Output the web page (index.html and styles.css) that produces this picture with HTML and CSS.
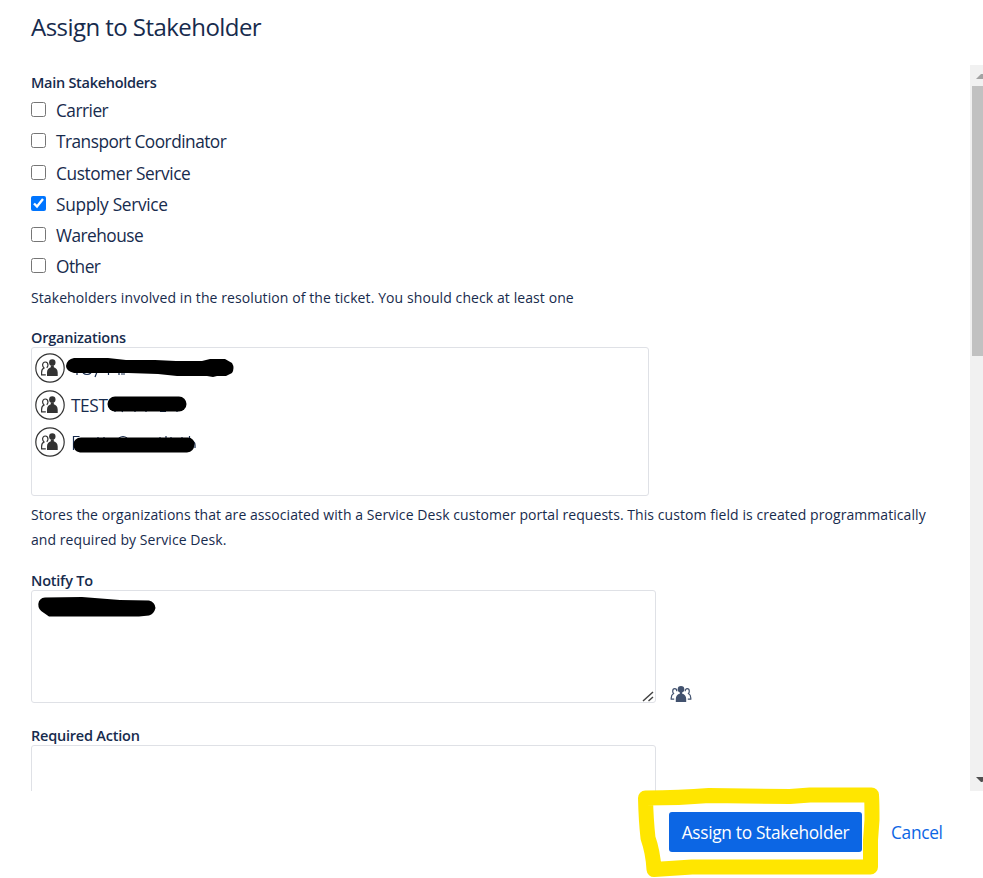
FILE: index.html
```html
<!DOCTYPE html>
<html lang="en">
<head>
<meta charset="utf-8">
<title>Assign to Stakeholder</title>
<link rel="stylesheet" href="styles.css">
</head>
<body>
<svg class="defs" width="0" height="0" aria-hidden="true">
  <symbol id="org" viewBox="0 0 30 30">
    <circle cx="15" cy="15" r="14.2" fill="#fff" stroke="#333" stroke-width="1.2"/>
    <circle cx="17.3" cy="9.4" r="3.2" fill="#333"/>
    <path d="M12 23v-3.500c0-3 1.700-4.500 3.800-5.300v-2h3v2c2.100.8 3.900 2.300 3.900 5.300V23z" fill="#333"/>
    <path d="M13 12.200c0-2-1.100-3.200-2.700-3.200S7.600 10.200 7.600 12c0 1.300.7 2.300 1.400 3-1.600.7-2.400 2.300-2.400 4.500v2.300h4.200M13 12c0 1.300-.6 2-1.200 2.800" fill="none" stroke="#333" stroke-width="1.200"/>
  </symbol>
</svg>
<main class="dialog">
  <header class="head"><h1>Assign to Stakeholder</h1></header>
  <div class="body">
    <form class="content">
      <fieldset class="group">
        <legend class="label">Main Stakeholders</legend>
        <label class="check"><input type="checkbox"><span class="tight">Carrier</span></label>
        <label class="check"><input type="checkbox"><span class="tight">Transport Coordinator</span></label>
        <label class="check nudge"><input type="checkbox"><span>Customer Service</span></label>
        <label class="check"><input type="checkbox" checked><span class="loose">Supply Service</span></label>
        <label class="check"><input type="checkbox"><span class="tight">Warehouse</span></label>
        <label class="check"><input type="checkbox"><span class="tight">Other</span></label>
        <p class="help first">Stakeholders involved in the resolution of the ticket. You should check at least one</p>
      </fieldset>
      <section class="field orgs">
        <div class="label">Organizations</div>
        <div class="orgbox">
          <div class="org"><svg class="avatar"><use href="#org"/></svg></div>
          <div class="org"><svg class="avatar"><use href="#org"/></svg><span>TEST</span></div>
          <div class="org"><svg class="avatar"><use href="#org"/></svg></div>
          <svg class="ink orgink" viewBox="31 347 218 149">
            <g fill="none" stroke="#172b4d" stroke-width="1.200">
              <path d="M77 372v3M83 373q4 3 8 0M97 372l-2 5M108.500 372v3M119 372v3M121 374h4M115 410v2M123 410l-1 2M135 410v2M146 410v2M160 411.500h6M177 410v2"/>
              <path d="M73.500 450v-13.500h6M98 437v3M104 437v3M119 438q4-3 8 0M160 437v3M166 436v4M171 437v3M182 437v3M189.500 436v5M191 441q4 0 4 4v3"/>
            </g>
            <path d="M74 358H108L126 360H155L176 361H202L210 359H225L232 363Q235 368 232 373L226 376H217L213 377L207 376H177L158 374L128 373H74Q66 371 66 366Q67 359 74 358Z"/>
            <rect x="107.500" y="396.500" width="79" height="15" rx="7.500"/>
            <path d="M81 437.500H188Q194 438 194.500 444Q194 452 187 452.500H80Q73 451 73.500 444Q74 438 81 437.500Z"/>
          </svg>
        </div>
        <p class="help">Stores the organizations that are associated with a Service Desk customer portal requests. This custom field is created programmatically<br>and required by Service Desk.</p>
      </section>
      <section class="field notify">
        <div class="label">Notify To</div>
        <div class="notifyrow">
          <div class="area">
            <svg class="ink notifyink" viewBox="31 590 135 30"><path d="M45 597.500L82 597L120 600L149 600.500Q155 602 155.500 608Q154 614 149 615.500L139 616.500H49L44 613Q38 610 38.300 604Q39 598 45 597.500Z"/></svg>
            <svg class="grip" viewBox="0 0 12 12"><path d="M1 11L11 2M6.500 11L11 7" stroke="#444" stroke-width="1.500"/></svg>
          </div>
          <svg class="people" viewBox="0 0 22 18">
            <g fill="#42526e"><circle cx="11" cy="4.300" r="3.300"/><path d="M5.800 17v-3c0-3 1.600-4.800 4-5.300V7h2.400v1.700c2.400.5 4 2.300 4 5.300v3z"/></g>
            <path d="M6.800 6.300C6.800 4.600 6 3.600 4.800 3.600S2.700 4.700 2.700 6.300c0 1 .4 1.700.9 2.300C2 9.500 1.200 11 1.200 13v1.200h3M15.200 6.300c0-1.700.8-2.700 2-2.700s2.100 1.100 2.100 2.700c0 1-.4 1.700-.9 2.300 1.600.9 2.400 2.400 2.400 4.400v1.200h-3" fill="none" stroke="#42526e" stroke-width="1.200"/>
          </svg>
        </div>
      </section>
      <section class="field action">
        <div class="label">Required Action</div>
        <div class="area"></div>
      </section>
    </form>
    <div class="scroll">
      <svg viewBox="0 0 13 21"><path d="M6 14h8V9.500L13 9h-2z" fill="#a3a3a3"/></svg>
      <div class="thumb"></div>
      <svg class="down" viewBox="0 0 13 21"><path d="M6 7h8v4l-2 1h-1z" fill="#505050"/></svg>
    </div>
  </div>
  <footer class="foot">
    <button class="submit"><span>Assign to Stakeholder</span></button>
    <a class="cancel">Cancel</a>
    <svg class="mark" viewBox="630 780 260 98"><path d="M645.500 798Q680 798 709 795.500L790 796.500L810 795H871.500Q872 802 872 820L870.500 840V867L692 867L654 869.500Q653 852 648 838Q646 820 645.500 798Z" fill="none" stroke="#ffe600" stroke-width="15" stroke-linejoin="round"/></svg>
  </footer>
</main>
</body>
</html>
```

FILE: styles.css
```css
* { box-sizing: border-box; }
body { margin: 0; background: #fff; color: #172b4d; font-family: "Open Sans", "Noto Sans", sans-serif; overflow: hidden; }
.defs { display: block; }
.dialog { height: 878px; display: flex; flex-direction: column; }
.head { height: 65px; padding: 10px 31px; flex: none; }
h1 { margin: 0; font-size: 24px; line-height: 34px; font-weight: 400; white-space: nowrap; letter-spacing: -0.55px; }
.body { height: 726px; flex: none; display: flex; overflow: hidden; }
.content { flex: 1; padding: 8px 31px 0; min-width: 0; }
.group { border: 0; padding: 0; margin: 0; }
.label { display: block; height: 20px; padding: 0; font-size: 14.5px; font-weight: 600; line-height: 22px; white-space: nowrap; letter-spacing: -0.22px; }
.group .label { height: 22px; line-height: 20px; letter-spacing: -0.28px; }
.check { display: flex; height: 31.2px; font-size: 17.3px; line-height: 32px; letter-spacing: -0.4px; }
.check.nudge { padding-top: 1px; }
.check input { width: 15px; height: 15px; margin: 7px 10px 0 0; accent-color: #0075ff; }
.check span { white-space: nowrap; }
.check .tight { letter-spacing: -0.52px; }
.check .loose { letter-spacing: -0.3px; }
.help { margin: 0; font-size: 14px; line-height: 25px; white-space: nowrap; letter-spacing: 0.063px; }
.help.first { padding-top: 3px; letter-spacing: 0.09px; }
.orgs { margin-top: 17px; }
.orgbox { position: relative; width: 618px; height: 149px; border: 1px solid #dfe1e6; border-radius: 3px; padding: 5px 3px; margin-bottom: 6px; }
.org { display: flex; align-items: center; height: 37px; gap: 6px; font-size: 17.3px; line-height: 30px; padding-bottom: 7px; letter-spacing: -0.4px; }
.org span { padding-top: 2px; }
.avatar { width: 30px; height: 30px; }
.ink { position: absolute; left: -1px; top: -1px; }
.orgink { width: 218px; height: 149px; }
.notify { margin-top: 18px; }
.notifyrow { display: flex; align-items: flex-end; gap: 14px; }
.area { position: relative; width: 625px; height: 113px; border: 1px solid #dfe1e6; border-radius: 3px; flex: none; }
.notifyink { width: 135px; height: 30px; }
.grip { position: absolute; right: 1px; bottom: 0; width: 12px; height: 12px; }
.people { width: 22px; height: 18px; }
.action { margin-top: 22px; }
.scroll { width: 13px; background: #f1f1f1; display: flex; flex-direction: column; }
.scroll svg { width: 13px; height: 21px; flex: none; }
.thumb { height: 270px; margin-left: 2px; background: #c1c1c1; }
.scroll .down { margin-top: auto; }
.foot { position: relative; flex: 1; display: flex; align-items: flex-start; padding: 21px 0 0 669px; font-size: 17.3px; line-height: 41px; letter-spacing: -0.3px; }
.submit { width: 193px; height: 40px; border: 0; border-radius: 3px; padding: 0; background: #0c66e4; color: #fff; font: inherit; letter-spacing: inherit; white-space: nowrap; }
.cancel { margin-left: 29px; color: #0c66e4; }
.mark { position: absolute; left: 630px; top: -11px; width: 260px; height: 98px; }
```
